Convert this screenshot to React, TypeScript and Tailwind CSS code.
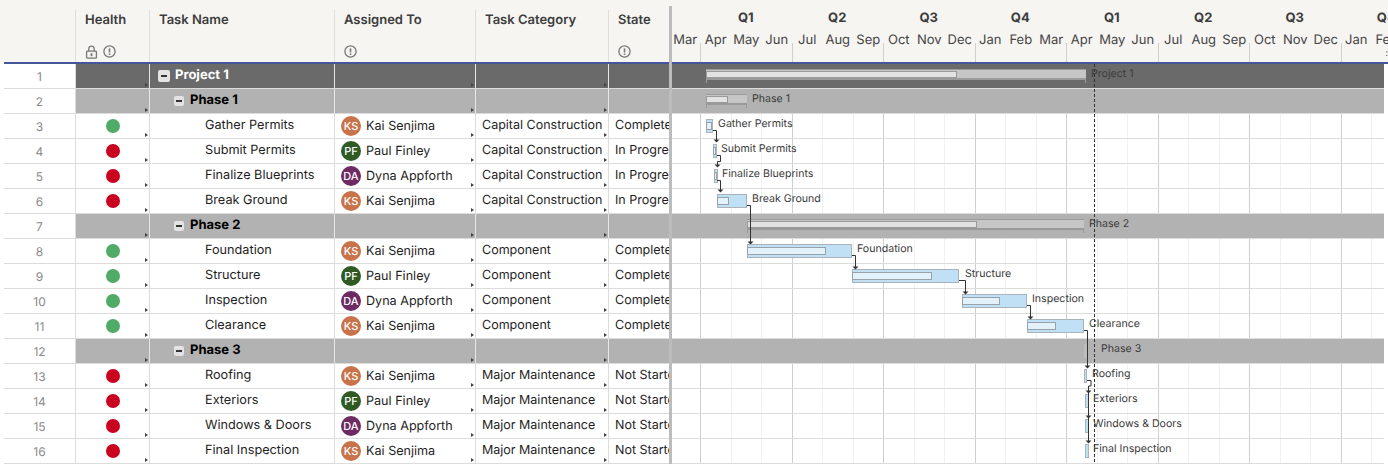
const FONT = "font-['Inter','Liberation_Sans',sans-serif] [text-rendering:geometricPrecision] antialiased"

const ROW_H = 25
const GANTT_X = 670

type Row = {
  name: string
  level: 0 | 1 | 2
  health?: 'green' | 'red'
  person?: 'KS' | 'PF' | 'DA'
  category?: string
  state?: string
}

const people = {
  KS: { name: 'Kai Senjima', color: 'bg-[#c8734a]' },
  PF: { name: 'Paul Finley', color: 'bg-[#2f5a24]' },
  DA: { name: 'Dyna Appforth', color: 'bg-[#6d2a63]' },
}

const rows: Row[] = [
  { name: 'Project 1', level: 0 },
  { name: 'Phase 1', level: 1 },
  { name: 'Gather Permits', level: 2, health: 'green', person: 'KS', category: 'Capital Construction', state: 'Complete' },
  { name: 'Submit Permits', level: 2, health: 'red', person: 'PF', category: 'Capital Construction', state: 'In Progress' },
  { name: 'Finalize Blueprints', level: 2, health: 'red', person: 'DA', category: 'Capital Construction', state: 'In Progress' },
  { name: 'Break Ground', level: 2, health: 'red', person: 'KS', category: 'Capital Construction', state: 'In Progress' },
  { name: 'Phase 2', level: 1 },
  { name: 'Foundation', level: 2, health: 'green', person: 'KS', category: 'Component', state: 'Complete' },
  { name: 'Structure', level: 2, health: 'green', person: 'PF', category: 'Component', state: 'Complete' },
  { name: 'Inspection', level: 2, health: 'green', person: 'DA', category: 'Component', state: 'Complete' },
  { name: 'Clearance', level: 2, health: 'green', person: 'KS', category: 'Component', state: 'Complete' },
  { name: 'Phase 3', level: 1 },
  { name: 'Roofing', level: 2, health: 'red', person: 'KS', category: 'Major Maintenance', state: 'Not Started' },
  { name: 'Exteriors', level: 2, health: 'red', person: 'PF', category: 'Major Maintenance', state: 'Not Started' },
  { name: 'Windows & Doors', level: 2, health: 'red', person: 'DA', category: 'Major Maintenance', state: 'Not Started' },
  { name: 'Final Inspection', level: 2, health: 'red', person: 'KS', category: 'Major Maintenance', state: 'Not Started' },
]

// x, end and progress end are page pixels, row is the zero based row index
const summaryBars = [
  { row: 0, x: 706, end: 1086, done: 957 },
  { row: 1, x: 706, end: 747, done: 728 },
  { row: 6, x: 747, end: 1084, done: 977 },
]

const taskBars = [
  { row: 2, x: 706, end: 713, done: 712 },
  { row: 3, x: 713, end: 717, done: 716 },
  { row: 4, x: 714, end: 718, done: 717 },
  { row: 5, x: 717, end: 747, done: 729 },
  { row: 7, x: 747, end: 852, done: 826 },
  { row: 8, x: 852, end: 959, done: 932 },
  { row: 9, x: 962, end: 1027, done: 1000 },
  { row: 10, x: 1027, end: 1084, done: 1056 },
  { row: 12, x: 1084, end: 1087, done: 1084 },
  { row: 13, x: 1085, end: 1089, done: 1085 },
  { row: 14, x: 1085, end: 1089, done: 1085 },
  { row: 15, x: 1085, end: 1089, done: 1085 },
]

const labels = [
  { row: 0, x: 1091, text: 'Project 1' },
  { row: 1, x: 752, text: 'Phase 1' },
  { row: 2, x: 718, text: 'Gather Permits' },
  { row: 3, x: 721, text: 'Submit Permits' },
  { row: 4, x: 722, text: 'Finalize Blueprints' },
  { row: 5, x: 752, text: 'Break Ground' },
  { row: 6, x: 1089, text: 'Phase 2' },
  { row: 7, x: 857, text: 'Foundation' },
  { row: 8, x: 965, text: 'Structure' },
  { row: 9, x: 1032, text: 'Inspection' },
  { row: 10, x: 1089, text: 'Clearance' },
  { row: 11, x: 1101, text: 'Phase 3' },
  { row: 12, x: 1092, text: 'Roofing' },
  { row: 13, x: 1093, text: 'Exteriors' },
  { row: 14, x: 1093, text: 'Windows & Doors' },
  { row: 15, x: 1093, text: 'Final Inspection' },
]

const links = [
  'M713 130.5H716.5V140',
  'M717 155.5H720.5V161.5H717.5V165',
  'M717 180.5H720.5V190',
  'M747 205.5H750.5V242',
  'M852 255.5H855.5V267',
  'M959 280.5H965.5V292',
  'M1027 305.5H1030.5V317',
  'M1084 330.5H1087.5V366',
  'M1087 380.5H1091V386H1088.5V391',
  'M1088.5 391V441',
]

const arrows: [number, number][] = [
  [716.5, 142], [717.5, 167], [720.5, 192], [750.5, 244], [855.5, 269], [965.5, 294],
  [1030.5, 319], [1087.5, 368], [1088.5, 393], [1088.5, 418], [1088.5, 443],
]

const months = ['Mar', 'Apr', 'May', 'Jun', 'Jul', 'Aug', 'Sep', 'Oct', 'Nov', 'Dec', 'Jan', 'Feb', 'Mar', 'Apr', 'May', 'Jun', 'Jul', 'Aug', 'Sep', 'Oct', 'Nov', 'Dec', 'Jan', 'Feb']
const quarters = ['Q1', 'Q2', 'Q3', 'Q4', 'Q1', 'Q2', 'Q3', 'Q4']
const monthLines = Array.from({ length: 23 }, (_, i) => 700 + i * 30.5)

const LockIcon = () => (
  <svg width="13" height="14" viewBox="0 0 13 14" fill="none" stroke="#777" strokeWidth="1.3">
    <rect x="1.6" y="6.2" width="9.8" height="7" rx="0.8" />
    <path d="M3.8 6V3.8a2.7 2.7 0 0 1 5.4 0V6" />
    <rect x="5.6" y="8.2" width="1.8" height="3" fill="#777" stroke="none" />
  </svg>
)

const InfoIcon = () => (
  <svg width="13" height="13" viewBox="0 0 13 13" fill="none" stroke="#777" strokeWidth="1.3">
    <circle cx="6.5" cy="6.5" r="5.6" />
    <path d="M6.5 3.4V7.4" strokeWidth="1.6" />
    <rect x="5.7" y="8.4" width="1.6" height="1.5" fill="#777" stroke="none" />
  </svg>
)

const Marker = () => (
  <span className="absolute right-[1px] bottom-[1px] h-0 w-0 border-y-[2px] border-l-[3px] border-y-transparent border-l-[#444]" />
)

function HeaderCell({ title, width, icons }: { title: string; width: string; icons?: React.ReactNode }) {
  return (
    <div className={`${width} flex h-[52px] shrink-0 flex-col justify-between border-r border-[#dfdedb] pt-[1px] pb-[4px] pl-[9px]`}>
      <span className="text-[13px] leading-[18px] font-semibold text-[#3c3c3c]">{title}</span>
      <div className="flex h-[13px] items-center gap-[5px]">{icons}</div>
    </div>
  )
}

function TableRow({ row, index }: { row: Row; index: number }) {
  const band = row.level === 0 ? 'bg-[#6a6a6a] border-[#e6e6e6]' : row.level === 1 ? 'bg-[#b2b2b2] border-[#e6e6e6]' : 'border-[#dcdcdc]'
  const cell = `relative h-full shrink-0 border-r ${band}`
  const fill = row.level === 0 ? 'bg-[#6a6a6a]' : row.level === 1 ? 'bg-[#b2b2b2]' : ''

  return (
    <div className="flex h-[25px] border-b border-[#dcdcdc]">
      <div className="flex w-[72px] shrink-0 items-center justify-center border-r border-[#dcdcdc] pt-[2px] text-[12px] text-[#8a8a8a]">
        {index + 1}
      </div>
      <div className={`${cell} flex w-[74px] items-center justify-center pb-[1px]`}>
        {row.health && (
          <span className={`h-[14px] w-[14px] rounded-full ${row.health === 'green' ? 'bg-[#4fab66]' : 'bg-[#c9021f]'}`} />
        )}
        <Marker />
      </div>
      <div className={`${cell} w-[185px]`}>
        {row.level === 2 ? (
          <span className="block pt-[2px] pl-[55px] text-[12.7px] leading-[20px] text-[#1e1e1e]">{row.name}</span>
        ) : (
          <div className={`flex h-[22px] items-center pt-[1px] ${row.level === 0 ? 'pl-[8px]' : 'pl-[24px]'}`}>
            <span
              className={`flex items-center justify-center rounded-[2px] bg-[#e3e3e3] ${
                row.level === 0 ? 'mr-[5px] h-[12px] w-[12px]' : 'mr-[6px] h-[10px] w-[10px]'
              }`}
            >
              <span className="h-[2px] w-[6px] bg-[#333]" />
            </span>
            <span className={`text-[13px] font-bold ${row.level === 0 ? 'text-white' : 'text-black'}`}>{row.name}</span>
          </div>
        )}
      </div>
      <div className={`${cell} flex w-[141px] items-center gap-[5px] pl-[6px]`}>
        {row.person && (
          <>
            <span
              className={`flex h-[20px] w-[20px] items-center justify-center rounded-full text-[11px] font-medium text-white ${people[row.person].color}`}
            >
              {row.person}
            </span>
            <span className="pt-[2px] text-[12.6px] text-[#1e1e1e]">{people[row.person].name}</span>
          </>
        )}
        <Marker />
      </div>
      <div className={`${cell} w-[133px] pt-[2px] pl-[6px] text-[12.5px] leading-[20px] text-[#1e1e1e]`}>
        {row.category}
        <Marker />
      </div>
      <div className={`h-full min-w-0 flex-1 overflow-hidden pt-[2px] pl-[6px] text-[12.5px] leading-[20px] whitespace-nowrap text-[#1e1e1e] ${fill}`}>
        {row.state}
      </div>
    </div>
  )
}

function SummaryBar({ row, x, end, done }: { row: number; x: number; end: number; done: number }) {
  const top = row * ROW_H + 5
  return (
    <>
      <div
        className="absolute h-[11px] border-t border-b-2 border-[#9a9a9a] bg-[#c6c6c6]"
        style={{ left: x - GANTT_X, top, width: end - x }}
      />
      <div
        className="absolute h-[7px] border border-[#9a9a9a] bg-[#e2e2e2]"
        style={{ left: x - GANTT_X, top: top + 2, width: done - x }}
      />
      <div className="absolute h-[3px] w-[1px] bg-[#9a9a9a]" style={{ left: x - GANTT_X, top: top + 11 }} />
      <div className="absolute h-[3px] w-[1px] bg-[#9a9a9a]" style={{ left: end - GANTT_X - 1, top: top + 11 }} />
    </>
  )
}

function TaskBar({ row, x, end, done }: { row: number; x: number; end: number; done: number }) {
  const top = row * ROW_H + 5
  return (
    <>
      <div
        className="absolute h-[14px] border border-[#a9b4ba] bg-[#c0e0f5]"
        style={{ left: x - GANTT_X, top, width: end - x }}
      />
      {done > x && (
        <div
          className="absolute h-[8px] border border-[#98a2a8] bg-[#e3f1fb]"
          style={{ left: x - GANTT_X, top: top + 3, width: done - x }}
        />
      )}
    </>
  )
}

function Gantt() {
  return (
    <div className="relative w-[718px] shrink-0 overflow-hidden">
      <div className="relative h-[62px] bg-[#f6f5f2]">
        <div className="flex h-[33px] pl-[30px]">
          {quarters.map((q, i) => (
            <div key={i} className="flex w-[91.5px] shrink-0 items-end justify-center pb-[6px] text-[13px] leading-[18px] font-bold text-[#3c3c3c]">
              {q}
            </div>
          ))}
        </div>
        <div className="flex h-[20px]">
          {months.map((m, i) => (
            <div key={i} className="w-[30.5px] shrink-0 text-center text-[13px] leading-[14px] whitespace-nowrap text-[#444]">
              {m}
            </div>
          ))}
        </div>
        {/* header ticks */}
        <div className="absolute top-[43px] left-[30px] flex h-[19px]">
          {quarters.map((q, i) => (
            <div key={i} className="h-full w-[91.5px] shrink-0 border-l border-[#cfcfcf]" />
          ))}
        </div>
        <span className="absolute top-[50px] right-[0px] text-[9px] leading-[8px] text-[#444]">:</span>
      </div>
      <div className="h-[2px] bg-[#44559a]" />

      <div className="relative w-[714px]">
        {rows.map((row, i) => (
          <div
            key={i}
            className={`h-[25px] border-b border-[#dcdcdc] ${row.level === 0 ? 'bg-[#6a6a6a]' : row.level === 1 ? 'bg-[#b2b2b2]' : ''}`}
          />
        ))}

        {/* month and quarter lines, only on task rows */}
        {rows.map((row, i) =>
          row.level === 2
            ? monthLines.map((x, k) => (
                <div
                  key={`${i}-${k}`}
                  className={`absolute h-[24px] w-[1px] ${k % 3 === 0 ? 'bg-[#cfcfcf]' : 'bg-[#f1f1f1]'}`}
                  style={{ left: x - GANTT_X, top: i * ROW_H }}
                />
              ))
            : null,
        )}

        {summaryBars.map((b) => (
          <SummaryBar key={b.row} {...b} />
        ))}
        {taskBars.map((b) => (
          <TaskBar key={b.row} {...b} />
        ))}
        <div className="absolute h-[14px] w-[3px] bg-[#bdbdbd]" style={{ left: 1084 - GANTT_X, top: 11 * ROW_H + 5 }} />

        {labels.map((l) => (
          <span
            key={l.row}
            className="absolute text-[10.6px] leading-[14px] whitespace-nowrap text-[#3a3a3a]"
            style={{ left: l.x - GANTT_X, top: l.row * ROW_H + 3 }}
          >
            {l.text}
          </span>
        ))}

        <svg className="absolute top-0 left-0" width="714" height="400" viewBox={`${GANTT_X} 64 714 400`} fill="none">
          <path d="M1094.5 64V464" stroke="#333" strokeDasharray="3 2" />
          {links.map((d) => (
            <path key={d} d={d} stroke="#333" />
          ))}
          {arrows.map(([x, y]) => (
            <path key={`${x}-${y}`} d={`M${x - 3} ${y - 2.5}H${x + 3}L${x} ${y + 0.5}Z`} fill="#333" />
          ))}
        </svg>
      </div>
    </div>
  )
}

export default function App() {
  return (
    <div className={`${FONT} relative flex h-[464px] w-[1388px] overflow-hidden bg-white`}>
      <div className="w-[670px] shrink-0 overflow-hidden">
        <div className="flex h-[62px] items-end bg-[#f6f5f2] pl-[75px]">
          <HeaderCell
            title="Health"
            width="w-[75px] border-l"
            icons={
              <>
                <LockIcon />
                <InfoIcon />
              </>
            }
          />
          <HeaderCell title="Task Name" width="w-[185px]" />
          <HeaderCell title="Assigned To" width="w-[141px]" icons={<InfoIcon />} />
          <HeaderCell title="Task Category" width="w-[133px]" />
          <HeaderCell title="State" width="w-[62px] border-r-0" icons={<InfoIcon />} />
        </div>
        <div className="ml-[4px]">
          <div className="h-[2px] bg-[#44559a]" />
          {rows.map((row, i) => (
            <TableRow key={i} row={row} index={i} />
          ))}
        </div>
      </div>

      <div>
        <Gantt />
      </div>

      {/* splitter between the grid and the chart */}
      <div className="absolute top-[6px] bottom-0 left-[669px] w-[3px] bg-[#bcbcbc]" />
    </div>
  )
}
